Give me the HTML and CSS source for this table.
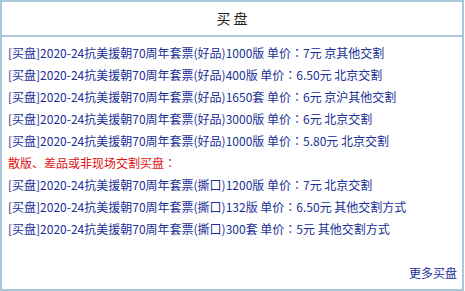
FILE: index.html
```html
<!DOCTYPE html>
<html lang="zh-CN">
<head>
<meta charset="utf-8">
<link rel="stylesheet" href="styles.css">
</head>
<body>
<div class="box">
  <div class="head">买 盘</div>
  <ul class="list">
    <li><a>[买盘]2020-24抗美援朝70周年套票(好品)1000版 单价<span class="colon" lang="zh-TW">：</span>7元 京其他交割</a></li>
    <li><a>[买盘]2020-24抗美援朝70周年套票(好品)400版 单价<span class="colon" lang="zh-TW">：</span>6.50元 北京交割</a></li>
    <li><a>[买盘]2020-24抗美援朝70周年套票(好品)1650套 单价<span class="colon" lang="zh-TW">：</span>6元 京沪其他交割</a></li>
    <li><a>[买盘]2020-24抗美援朝70周年套票(好品)3000版 单价<span class="colon" lang="zh-TW">：</span>6元 北京交割</a></li>
    <li><a>[买盘]2020-24抗美援朝70周年套票(好品)1000版 单价<span class="colon" lang="zh-TW">：</span>5.80元 北京交割</a></li>
    <li class="red">散版、差品或非现场交割买盘<span class="colon" lang="zh-TW">：</span></li>
    <li><a>[买盘]2020-24抗美援朝70周年套票(撕口)1200版 单价<span class="colon" lang="zh-TW">：</span>7元 北京交割</a></li>
    <li><a>[买盘]2020-24抗美援朝70周年套票(撕口)132版 单价<span class="colon" lang="zh-TW">：</span>6.50元 其他交割方式</a></li>
    <li><a>[买盘]2020-24抗美援朝70周年套票(撕口)300套 单价<span class="colon" lang="zh-TW">：</span>5元 其他交割方式</a></li>
  </ul>
  <div class="more"><a>更多买盘</a></div>
</div>
</body>
</html>
```

FILE: styles.css
```css
html, body {
  margin: 0;
  padding: 0;
  background: #fff;
}
body {
  font-family: "Noto Sans CJK SC", "Liberation Sans", sans-serif;
  font-size: 12px;
}
.box {
  box-sizing: border-box;
  width: 464px;
  height: 291px;
  border: 2px solid #a9c7db;
  display: flex;
  flex-direction: column;
}
.head {
  height: 33px;
  line-height: 33px;
  border-bottom: 2px solid #a9c7db;
  text-align: center;
  font-size: 14px;
  color: #222;
}
.list {
  list-style: none;
  margin: 0;
  padding: 5px 0 0 6px;
}
.list li {
  line-height: 22px;
  height: 22px;
  white-space: nowrap;
}
.colon {
  font-family: "Noto Sans CJK TC", "Noto Sans CJK SC", sans-serif;
}
.list a, .more a {
  color: #202f96;
  text-decoration: none;
}
.list .red {
  color: #e01010;
}
.more {
  margin-top: auto;
  padding: 0 5px 5px 0;
  line-height: 22px;
  text-align: right;
}
```
